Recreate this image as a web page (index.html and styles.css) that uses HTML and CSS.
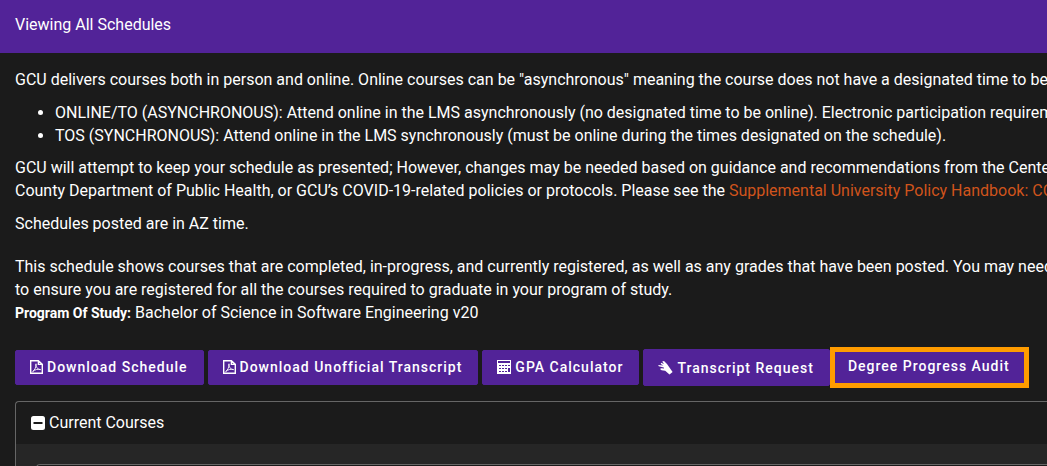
FILE: index.html
```html
<!DOCTYPE html>
<html lang="en">
<head>
    <meta charset="UTF-8">
    <meta name="viewport" content="width=device-width, initial-scale=1.0">
    <title>Viewing All Schedules</title>
    <link rel="stylesheet" href="styles.css">
</head>
<body>
    <header class="page-header">Viewing All Schedules</header>
    <main class="content">
        <div class="intro">
            <p>GCU delivers courses both in person and online. Online courses can be "asynchronous" meaning the course does not have a designated time to be online</p>
            <ul>
                <li>ONLINE/TO (ASYNCHRONOUS): Attend online in the LMS asynchronously (no designated time to be online). Electronic participation requirements</li>
                <li>TOS (SYNCHRONOUS): Attend online in the LMS synchronously (must be online during the times designated on the schedule).</li>
            </ul>
            <p>GCU will attempt to keep your schedule as presented; However, changes may be needed based on guidance and recommendations from the Centers<br>
            County Department of Public Health, or GCU’s COVID-19-related policies or protocols. Please see the <a href="#">Supplemental University Policy Handbook: COVID-19</a></p>
            <p>Schedules posted are in AZ time.</p>
        </div>
        <div class="program">
            This schedule shows courses that are completed, in-progress, and currently registered, as well as any grades that have been posted. You may need<br>
            to ensure you are registered for all the courses required to graduate in your program of study.<br>
            <strong>Program Of Study:</strong> Bachelor of Science in Software Engineering v20
        </div>
        <div class="actions">
            <button type="button" class="btn">
                <svg class="icon-pdf" viewBox="0 0 13 14" aria-hidden="true">
                    <path d="M.7.7H8.4L12.3 4.4V13.3H.7ZM8.4.7V4.4H12.3" fill="none" stroke="currentColor" stroke-width="1.4"/>
                    <path d="M2.6 11.6C4.5 10.6 6.4 6.8 6 3.8C5.4 6.8 7.6 9.4 10.6 9.6C8 8.9 5 9.4 2.6 11.6Z" fill="none" stroke="currentColor" stroke-width=".9"/>
                </svg>
                Download Schedule
            </button>
            <button type="button" class="btn">
                <svg class="icon-pdf" viewBox="0 0 13 14" aria-hidden="true">
                    <path d="M.7.7H8.4L12.3 4.4V13.3H.7ZM8.4.7V4.4H12.3" fill="none" stroke="currentColor" stroke-width="1.4"/>
                    <path d="M2.6 11.6C4.5 10.6 6.4 6.8 6 3.8C5.4 6.8 7.6 9.4 10.6 9.6C8 8.9 5 9.4 2.6 11.6Z" fill="none" stroke="currentColor" stroke-width=".9"/>
                </svg>
                Download Unofficial Transcript
            </button>
            <button type="button" class="btn">
                <svg class="icon-calc" viewBox="0 0 14 14" aria-hidden="true">
                    <path fill="currentColor" fill-rule="evenodd" d="M0 0H14V14H0ZM1 1V3H13V1ZM2 5V6H4V5ZM5 5V6H7V5ZM8 5V6H10V5ZM11 5V6H13V5ZM2 8V9H4V8ZM5 8V9H7V8ZM8 8V9H10V8ZM2 11V12H4V11ZM5 11V12H7V11ZM8 11V12H10V11ZM11 8V12H13V8Z"/>
                </svg>
                GPA Calculator
            </button>
            <button type="button" class="btn btn-tall">
                <svg class="icon-hand" viewBox="0 0 15 14" aria-hidden="true">
                    <path d="M4.2.6L6 0L9 3L14.600 11L11.500 13.600L7.200 9.800L3.600 9.200L2 8L3.200 7.200L6 7.500L5.800 6.500L.8 5.200L.2 4L5.400 4.500L2.800 3L3 1.800L6 3Z" fill="currentColor"/>
                </svg>
                Transcript Request
            </button>
            <button type="button" class="btn btn-highlight">Degree Progress Audit</button>
        </div>
        <section class="panel">
            <h2 class="panel-heading">
                <svg class="icon-minus" viewBox="0 0 14 14" aria-hidden="true">
                    <rect width="14" height="14" rx="2.500" fill="currentColor"/>
                    <path d="M2.500 7H11.500" stroke="#1b1b1b" stroke-width="2"/>
                </svg>
                Current Courses
            </h2>
            <div class="panel-body">
                <div class="course"></div>
            </div>
        </section>
    </main>
</body>
</html>
```
FILE: styles.css
```css
* {
    box-sizing: border-box;
}
body {
    margin: 0;
    height: 100vh;
    overflow: hidden;
    background-color: #1b1b1b;
    color: #fff;
    font: 16px/23px Roboto, "Liberation Sans", sans-serif;
}
.page-header {
    padding: 13px 15px 17px;
    background-color: #522398;
}
.content {
    padding: 15px 0 0 15px;
}
.intro,
.program {
    white-space: nowrap;
}
.intro {
    margin-bottom: 20px;
}
p {
    margin: 0 0 10px;
}
ul {
    margin: 0 0 9px;
    padding-left: 40px;
}
a {
    color: #d0541c;
    text-decoration: none;
}
strong {
    font-size: 14px;
}
.actions {
    display: flex;
    align-items: center;
    gap: 4px;
    margin: 22px 0 13px;
}
.btn {
    display: flex;
    align-items: center;
    gap: 4px;
    flex: none;
    height: 35px;
    padding: 0 15px 2px 14px;
    border: 1px solid #522398;
    border-radius: 2px;
    background-color: #522398;
    color: #fff;
    font: 500 14px/20px Roboto, "Liberation Sans", sans-serif;
    letter-spacing: 1px;
    white-space: nowrap;
    cursor: pointer;
}
.btn-tall {
    height: 37px;
    padding-bottom: 0;
}
.btn-highlight {
    height: 41px;
    margin-left: -4px;
    padding: 0 14px 4px 13px;
    border: 5px solid #ff9c00;
    border-radius: 0;
}
.icon-pdf {
    width: 13px;
    height: 14px;
}
.icon-calc,
.icon-minus {
    width: 14px;
    height: 14px;
}
.icon-hand {
    width: 15px;
    height: 14px;
}
.panel {
    border: 1px solid #666;
    border-right: 0;
    border-radius: 4px 0 0;
}
.panel-heading {
    display: flex;
    align-items: center;
    gap: 4px;
    margin: 0;
    padding: 9px 15px 10px;
    font-size: 16px;
    font-weight: 400;
}
.panel-body {
    padding: 20px 0 0 20px;
    background-color: #262626;
}
.course {
    height: 42px;
    border: 1px solid #666;
    border-right: 0;
    border-radius: 4px 0 0;
    background-color: #1b1b1b;
}
```
